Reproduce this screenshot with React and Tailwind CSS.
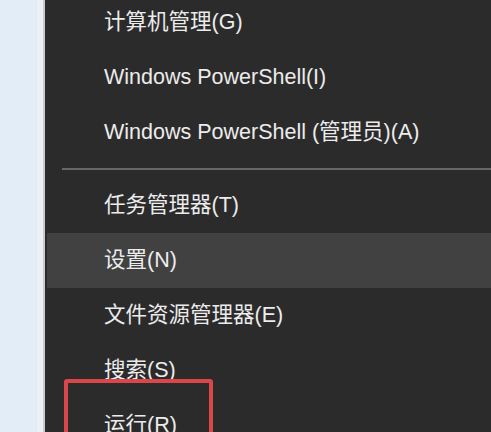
const ITEMS_TOP = [
  { label: '计算机管理(G)' },
  { label: 'Windows PowerShell(I)' },
  { label: 'Windows PowerShell (管理员)(A)' },
];

const ITEMS_BOTTOM = [
  { label: '任务管理器(T)' },
  { label: '设置(N)', active: true },
  { label: '文件资源管理器(E)' },
  { label: '搜索(S)' },
  { label: '运行(R)' },
];

function MenuItem({ label, active }) {
  return (
    <div
      className={`h-[55px] shrink-0 flex items-center pl-[57px] text-[21.5px] text-[#ececec] ${active ? 'bg-[#414141]' : ''}`}
    >
      {label}
    </div>
  );
}

export default function App() {
  return (
    <div
      className="relative flex w-[491px] h-[432px] overflow-hidden"
      style={{ fontFamily: '"Liberation Sans", "Noto Sans CJK SC", sans-serif' }}
    >
      <div className="w-[37px] bg-[#e2edf8]" />
      <div className="w-[6px] bg-[#eef1f4]" />
      <div className="w-[2px] bg-[#c8ccd1]" />

      <div className="flex-1 flex flex-col bg-[#2b2b2b] pl-[2px] -mt-[5px]">
        {ITEMS_TOP.map((it) => (
          <MenuItem key={it.label} {...it} />
        ))}

        <div className="h-[18px] shrink-0 flex items-center pl-[15px]">
          <div className="h-[2px] w-full bg-[#676767]" />
        </div>

        {ITEMS_BOTTOM.map((it) => (
          <MenuItem key={it.label} {...it} />
        ))}
      </div>

      {/* red highlight box drawn over the menu */}
      <div className="absolute left-[64px] top-[379px] w-[149px] h-[80px] border-[4px] border-[#d9474b] rounded-[3px]" />
    </div>
  );
}
